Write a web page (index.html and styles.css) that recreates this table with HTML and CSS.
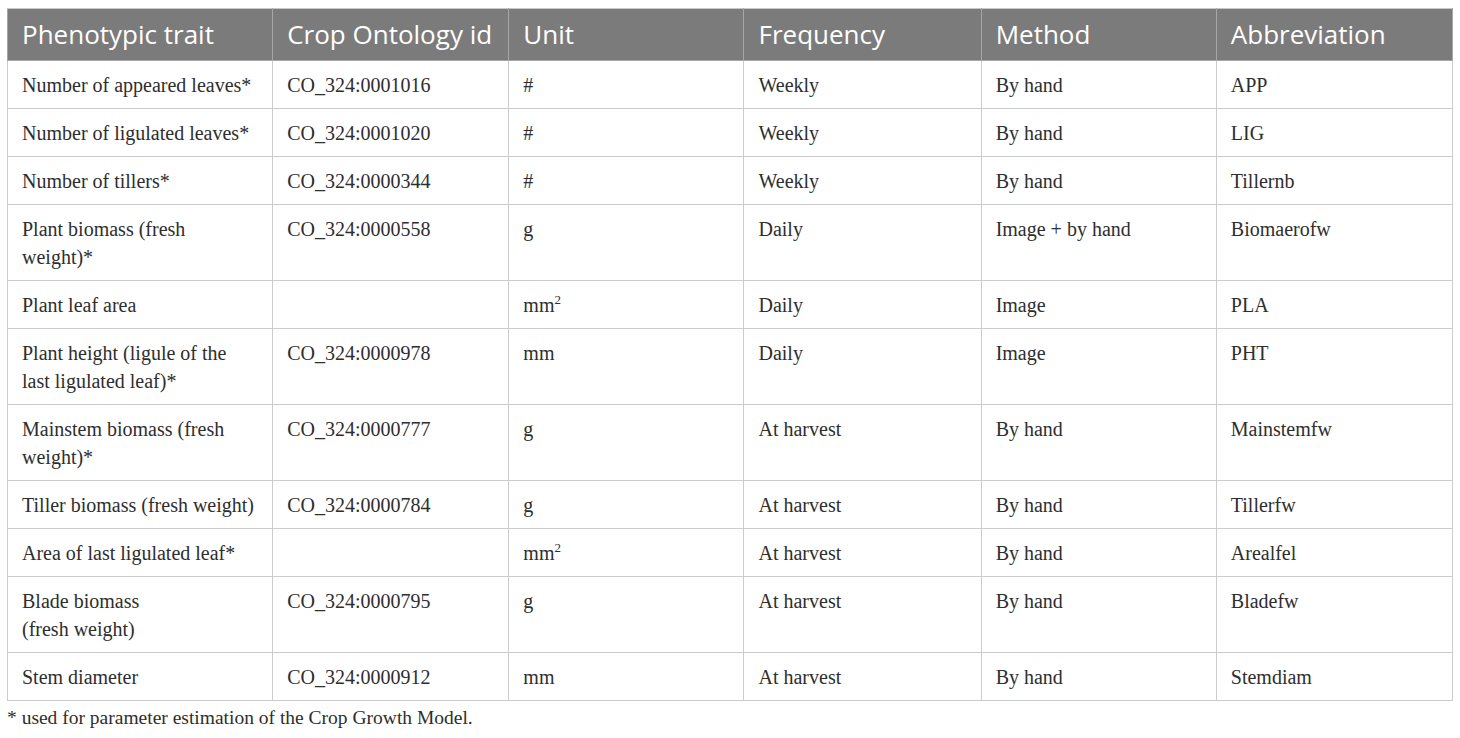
FILE: index.html
```html
<!DOCTYPE html>
<html>
<head>
<meta charset="utf-8">
<link rel="stylesheet" href="styles.css">
</head>
<body>
<div class="wrap">
<table class="traits">
<colgroup>
<col class="c1"><col class="c2"><col class="c3"><col class="c4"><col class="c5"><col class="c6">
</colgroup>
<thead>
<tr><th>Phenotypic trait</th><th>Crop Ontology id</th><th>Unit</th><th>Frequency</th><th>Method</th><th>Abbreviation</th></tr>
</thead>
<tbody>
<tr><td>Number of appeared leaves*</td><td>CO_324:0001016</td><td>#</td><td>Weekly</td><td>By hand</td><td>APP</td></tr>
<tr><td>Number of ligulated leaves*</td><td>CO_324:0001020</td><td>#</td><td>Weekly</td><td>By hand</td><td>LIG</td></tr>
<tr><td>Number of tillers*</td><td>CO_324:0000344</td><td>#</td><td>Weekly</td><td>By hand</td><td>Tillernb</td></tr>
<tr><td>Plant biomass (fresh<br>weight)*</td><td>CO_324:0000558</td><td>g</td><td>Daily</td><td>Image + by hand</td><td>Biomaerofw</td></tr>
<tr><td>Plant leaf area</td><td></td><td>mm<sup>2</sup></td><td>Daily</td><td>Image</td><td>PLA</td></tr>
<tr><td>Plant height (ligule of the<br>last ligulated leaf)*</td><td>CO_324:0000978</td><td>mm</td><td>Daily</td><td>Image</td><td>PHT</td></tr>
<tr><td>Mainstem biomass (fresh<br>weight)*</td><td>CO_324:0000777</td><td>g</td><td>At harvest</td><td>By hand</td><td>Mainstemfw</td></tr>
<tr><td>Tiller biomass (fresh weight)</td><td>CO_324:0000784</td><td>g</td><td>At harvest</td><td>By hand</td><td>Tillerfw</td></tr>
<tr><td>Area of last ligulated leaf*</td><td></td><td>mm<sup>2</sup></td><td>At harvest</td><td>By hand</td><td>Arealfel</td></tr>
<tr><td>Blade biomass<br>(fresh weight)</td><td>CO_324:0000795</td><td>g</td><td>At harvest</td><td>By hand</td><td>Bladefw</td></tr>
<tr><td>Stem diameter</td><td>CO_324:0000912</td><td>mm</td><td>At harvest</td><td>By hand</td><td>Stemdiam</td></tr>
</tbody>
</table>
<p class="note">* used for parameter estimation of the Crop Growth Model.</p>
</div>
</body>
</html>
```

FILE: styles.css
```css
html, body {
  margin: 0;
  padding: 0;
  background: #ffffff;
}
.wrap {
  padding: 8px 7px 0 7px;
}
.traits {
  border-collapse: collapse;
  table-layout: fixed;
  width: 1446px;
  font-family: "Liberation Serif", "Times New Roman", serif;
  font-size: 20px;
  color: #2e2e2e;
}
.c1 { width: 265px; }
.c2 { width: 236px; }
.c3 { width: 235px; }
.c4 { width: 237px; }
.c5 { width: 235px; }
.c6 { width: 236px; }
.traits th {
  background: #7b7b7b;
  color: #ffffff;
  font-family: "Open Sans", "Liberation Sans", sans-serif;
  font-weight: 400;
  font-size: 26px;
  line-height: 34px;
  text-align: left;
  padding: 8px 14px 9px 14px;
  border: 1px solid #a6a6a6;
  border-top-color: #c8c8c8;
}
.traits td {
  vertical-align: top;
  line-height: 28px;
  padding: 10px 14px 9px 14px;
  border: 1px solid #cccccc;
}
.traits sup {
  font-size: 13px;
  line-height: 0;
  vertical-align: 8px;
}
.note {
  margin: 6px 0 0 0;
  font-family: "Liberation Serif", "Times New Roman", serif;
  font-size: 19.5px;
  color: #2e2e2e;
}
```
